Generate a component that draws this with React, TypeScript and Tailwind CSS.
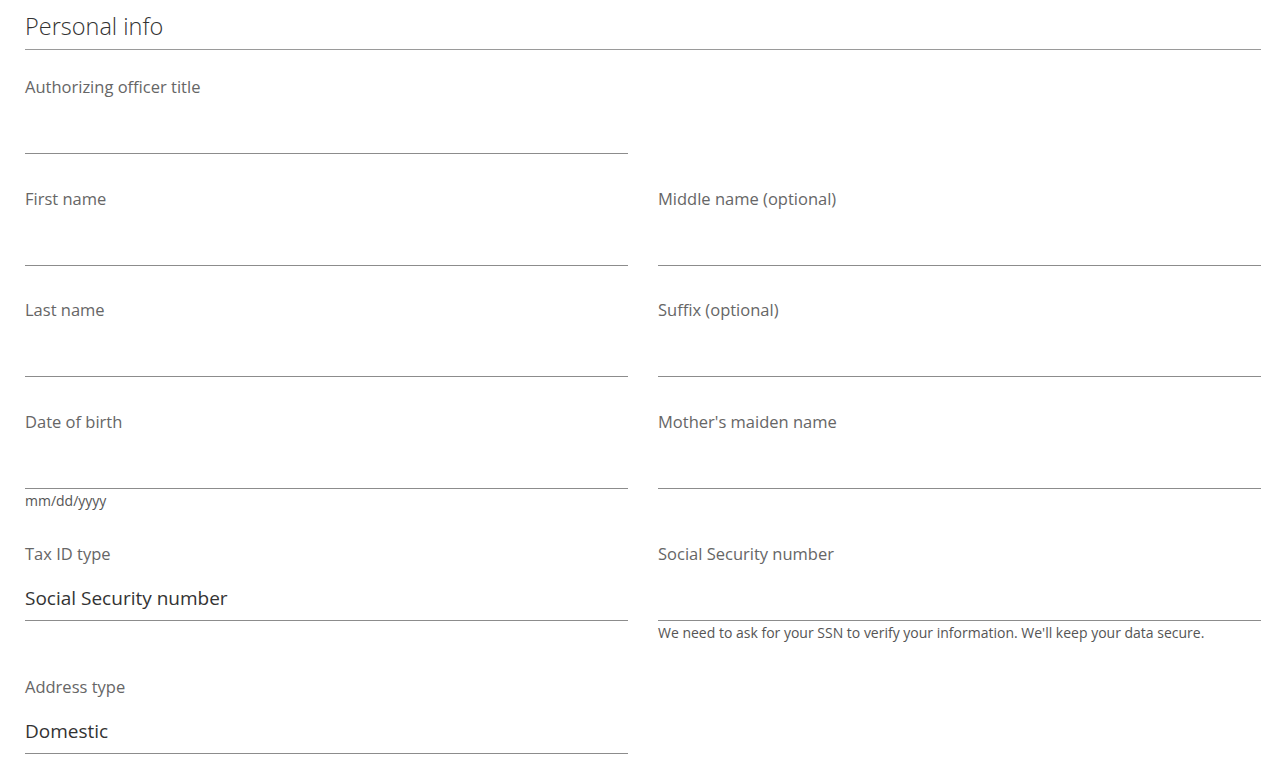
import React from "react";

type FieldProps = {
  label: string;
  value?: string;
  hint?: string;
};

const Field = ({ label, value, hint }: FieldProps) => {
  return (
    <div>
      <div className="text-[16.5px] leading-6 text-[#666666]">{label}</div>
      <div className="h-[55px] border-b border-[#8c8c8c] pt-[18px]">
        {value && <div className="text-[19px] leading-7 text-[#333333]">{value}</div>}
      </div>
      {hint && <div className="mt-[3px] text-[14px] leading-[18px] text-[#555555]">{hint}</div>}
    </div>
  );
};

const App = () => {
  return (
    <div className="min-h-screen w-full bg-white pl-[25px] pr-[23px] pt-[10px] font-['Open_Sans',sans-serif]">
      <div className="border-b border-[#9a9a9a] pb-[7px]">
        <h2 className="text-[23.5px] font-light leading-8 text-[#333333]">Personal info</h2>
      </div>
      <div className="mt-[25px] grid grid-cols-2 items-start gap-x-[30px] gap-y-[32.5px]">
        <Field label="Authorizing officer title" />
        <div />
        <Field label="First name" />
        <Field label="Middle name (optional)" />
        <Field label="Last name" />
        <Field label="Suffix (optional)" />
        <Field label="Date of birth" hint="mm/dd/yyyy" />
        <Field label="Mother's maiden name" />
        <Field label="Tax ID type" value="Social Security number" />
        <Field
          label="Social Security number"
          hint="We need to ask for your SSN to verify your information. We'll keep your data secure."
        />
        <Field label="Address type" value="Domestic" />
      </div>
    </div>
  );
};

export default App;
